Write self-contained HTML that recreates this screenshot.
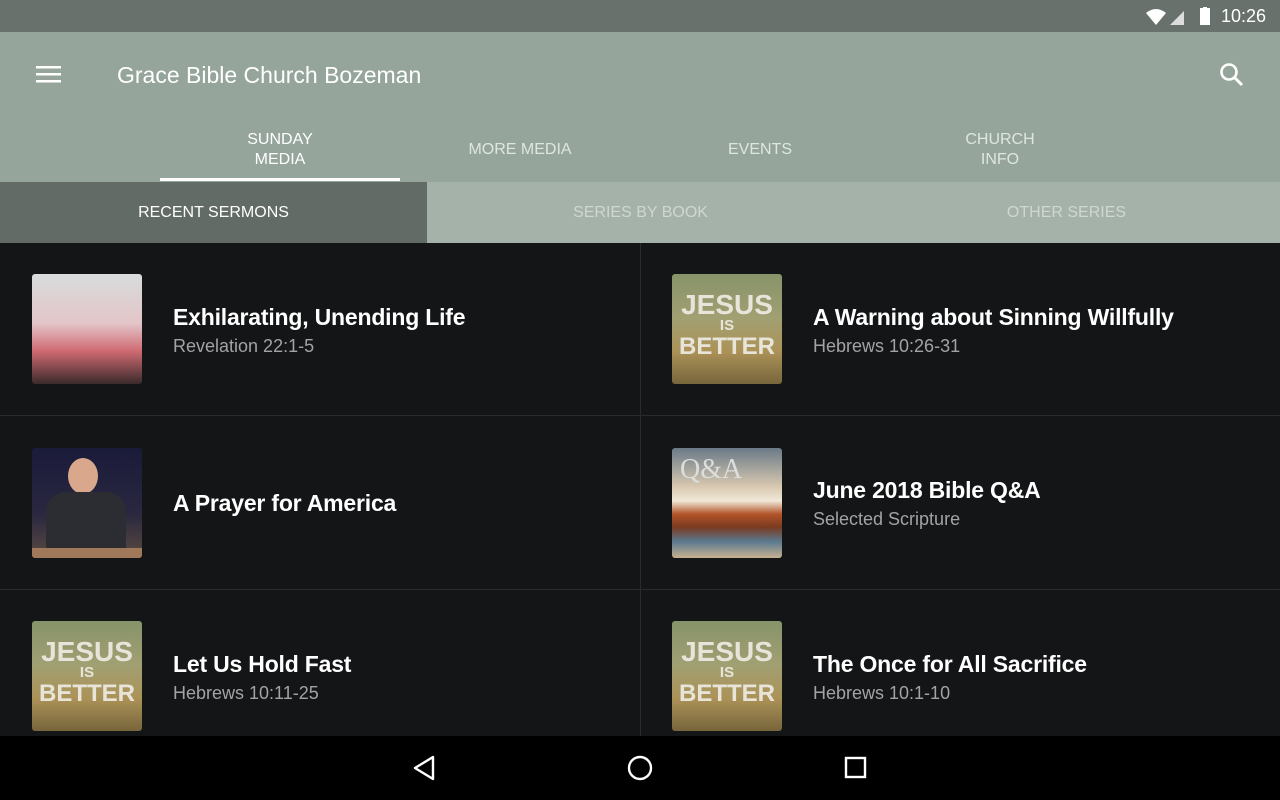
<!DOCTYPE html><html><head><style>
*{margin:0;padding:0;box-sizing:border-box}
body{width:1280px;height:800px;overflow:hidden;background:#141517;font-family:"Liberation Sans",sans-serif;position:relative}
.abs{position:absolute}
.sb{left:0;top:0;width:1280px;height:32px;background:#68716c}
.ab{left:0;top:32px;width:1280px;height:150px;background:#95a59b}
.tab{color:#dfe6e1;font-size:16px;text-align:center;line-height:20px;width:240px}
.st{top:182px;height:61px;line-height:61px;font-size:16px;text-align:center}
.th{width:110px;height:110px;border-radius:3px;overflow:hidden}
.jes{background:linear-gradient(180deg,#8e9a6e 0%,#a9a878 40%,#b49a5c 70%,#7d6a3e 100%);color:#f4f0e4;text-align:center;font-weight:bold;opacity:.95}
.t{color:#fff;font-weight:bold;font-size:23px;letter-spacing:-0.2px}
.s{color:#a3a3a3;font-size:18px}
</style></head><body>
<div class="abs sb"></div>
<div class="abs" style="right:14px;top:6px;color:#fff;font-size:18px">10:26</div>
<svg class="abs" style="left:1144px;top:7px" width="72" height="20"><path d="M2 6 Q12 -2 22 6 L12 18Z" fill="#fff"/><path d="M26 18 L40 4 L40 18Z" fill="#ddd"/><rect x="56" y="1" width="10" height="17" fill="#fff"/><rect x="59" y="0" width="4" height="2" fill="#fff"/></svg>
<div class="abs ab"></div>
<svg class="abs" style="left:36px;top:66px" width="26" height="18"><rect y="0" width="25" height="2.5" fill="#fff"/><rect y="7" width="25" height="2.5" fill="#fff"/><rect y="14" width="25" height="2.5" fill="#fff"/></svg>
<div class="abs" style="left:117px;top:62px;color:#fff;font-size:23px">Grace Bible Church Bozeman</div>
<svg class="abs" style="left:1219px;top:62px" width="26" height="26"><circle cx="10" cy="10" r="7.5" stroke="#fff" stroke-width="2.6" fill="none"/><path d="M15.5 15.5 L23 23" stroke="#fff" stroke-width="3"/></svg>
<div class="abs tab" style="left:160px;top:130px;color:#fff">SUNDAY<br>MEDIA</div>
<div class="abs" style="left:160px;top:178px;width:240px;height:3px;background:#fff"></div>
<div class="abs tab" style="left:400px;top:140px">MORE MEDIA</div>
<div class="abs tab" style="left:640px;top:140px">EVENTS</div>
<div class="abs tab" style="left:880px;top:130px">CHURCH<br>INFO</div>
<div class="abs st" style="left:0;width:427px;background:#626b66;color:#fff">RECENT SERMONS</div>
<div class="abs st" style="left:427px;width:853px;background:#a5b2aa"></div>
<div class="abs st" style="left:427px;width:427px;color:#cfd7d2">SERIES BY BOOK</div>
<div class="abs st" style="left:853px;width:427px;color:#cfd7d2">OTHER SERIES</div>
<div class="abs" style="left:640px;top:243px;width:1px;height:493px;background:#2a2b2d"></div>
<div class="abs" style="left:0;top:415px;width:1280px;height:1px;background:#2a2b2d"></div>
<div class="abs" style="left:0;top:589px;width:1280px;height:1px;background:#2a2b2d"></div>

<div class="abs th" style="left:32px;top:274px;background:linear-gradient(180deg,#d8dcdc 0%,#e3c5c8 45%,#d06a72 70%,#3a2a2a 100%)"></div>
<div class="abs t" style="left:173px;top:304px">Exhilarating, Unending Life</div>
<div class="abs s" style="left:173px;top:336px">Revelation 22:1-5</div>

<div class="abs th jes" style="left:672px;top:274px"><div style="font-size:28px;margin-top:18px;line-height:26px">JESUS</div><div style="font-size:15px;line-height:16px">IS</div><div style="font-size:24px;line-height:26px">BETTER</div></div>
<div class="abs t" style="left:813px;top:304px">A Warning about Sinning Willfully</div>
<div class="abs s" style="left:813px;top:336px">Hebrews 10:26-31</div>

<div class="abs th" style="left:32px;top:448px;background:linear-gradient(180deg,#1a1a3a,#2a2840 60%,#5a4a40)"><div style="position:absolute;left:36px;top:10px;width:30px;height:36px;border-radius:50%;background:#d9a88c"></div><div style="position:absolute;left:14px;top:44px;width:80px;height:66px;border-radius:20px 20px 0 0;background:#2b2d33"></div><div style="position:absolute;left:0;top:100px;width:110px;height:10px;background:#a0785a"></div></div>
<div class="abs t" style="left:173px;top:490px">A Prayer for America</div>

<div class="abs th" style="left:672px;top:448px;background:linear-gradient(180deg,#6a7a88 0%,#d8c8b0 35%,#f0e8d8 48%,#b4542a 60%,#7a3a20 72%,#5a7a90 85%,#c8b090 100%)"><div style="position:absolute;left:8px;top:6px;color:#ddd;font-family:'Liberation Serif';font-size:28px">Q&amp;A</div></div>
<div class="abs t" style="left:813px;top:477px">June 2018 Bible Q&amp;A</div>
<div class="abs s" style="left:813px;top:509px">Selected Scripture</div>

<div class="abs th jes" style="left:32px;top:621px"><div style="font-size:28px;margin-top:18px;line-height:26px">JESUS</div><div style="font-size:15px;line-height:16px">IS</div><div style="font-size:24px;line-height:26px">BETTER</div></div>
<div class="abs t" style="left:173px;top:651px">Let Us Hold Fast</div>
<div class="abs s" style="left:173px;top:683px">Hebrews 10:11-25</div>

<div class="abs th jes" style="left:672px;top:621px"><div style="font-size:28px;margin-top:18px;line-height:26px">JESUS</div><div style="font-size:15px;line-height:16px">IS</div><div style="font-size:24px;line-height:26px">BETTER</div></div>
<div class="abs t" style="left:813px;top:651px">The Once for All Sacrifice</div>
<div class="abs s" style="left:813px;top:683px">Hebrews 10:1-10</div>

<div class="abs" style="left:0;top:736px;width:1280px;height:64px;background:#000"></div>
<svg class="abs" style="left:0;top:736px" width="1280" height="64"><path d="M433 21 L415 32 L433 43Z" fill="none" stroke="#fff" stroke-width="2.4" stroke-linejoin="round"/><circle cx="640" cy="32" r="11" fill="none" stroke="#fff" stroke-width="2.4"/><rect x="846" y="22" width="19" height="19" fill="none" stroke="#fff" stroke-width="2.4"/></svg>
</body></html>
